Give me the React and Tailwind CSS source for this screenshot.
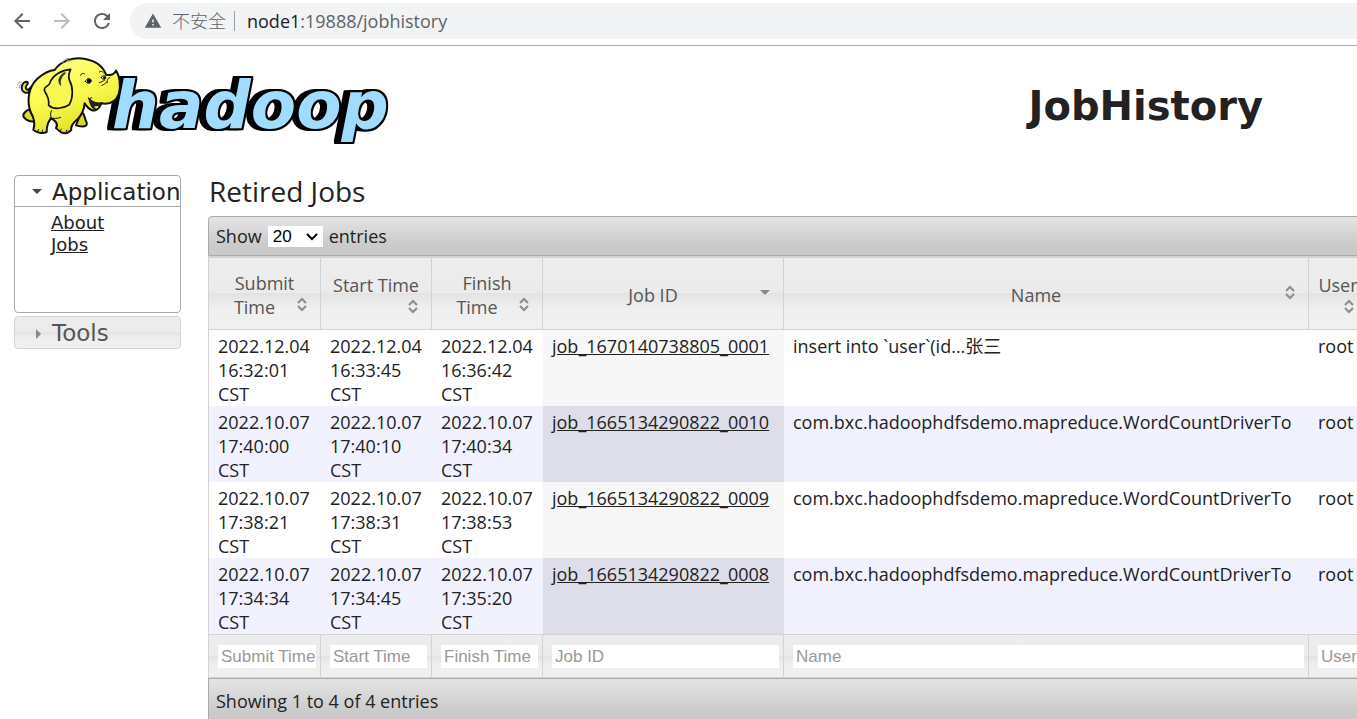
import React from "react";
import { MdArrowBack, MdArrowForward, MdRefresh, MdWarning } from "react-icons/md";

const jobs = [
  { submit: "2022.12.04 16:32:01 CST", start: "2022.12.04 16:33:45 CST", finish: "2022.12.04 16:36:42 CST", id: "job_1670140738805_0001", name: "insert into `user`(id...张三", user: "root" },
  { submit: "2022.10.07 17:40:00 CST", start: "2022.10.07 17:40:10 CST", finish: "2022.10.07 17:40:34 CST", id: "job_1665134290822_0010", name: "com.bxc.hadoophdfsdemo.mapreduce.WordCountDriverTo", user: "root" },
  { submit: "2022.10.07 17:38:21 CST", start: "2022.10.07 17:38:31 CST", finish: "2022.10.07 17:38:53 CST", id: "job_1665134290822_0009", name: "com.bxc.hadoophdfsdemo.mapreduce.WordCountDriverTo", user: "root" },
  { submit: "2022.10.07 17:34:34 CST", start: "2022.10.07 17:34:45 CST", finish: "2022.10.07 17:35:20 CST", id: "job_1665134290822_0008", name: "com.bxc.hadoophdfsdemo.mapreduce.WordCountDriverTo", user: "root" },
];

const columns = ["Submit Time", "Start Time", "Finish Time", "Job ID", "Name", "User"];

function HadoopLogo() {
  return (
    <svg width="384" height="100" viewBox="0 0 1152 300" role="img" aria-label="hadoop" className="shrink-0">
      <defs>
        <linearGradient id="skin" x1="0" y1="0" x2="0.4" y2="1">
          <stop offset="0" stopColor="#ffff8c" />
          <stop offset="0.55" stopColor="#fbfb50" />
          <stop offset="1" stopColor="#e2e22c" />
        </linearGradient>
        <filter id="outline" x="-5%" y="-10%" width="110%" height="120%">
          <feMorphology in="SourceAlpha" operator="dilate" radius="3" result="edge" />
          <feOffset in="edge" dx="-7" dy="0" result="near" />
          <feOffset in="edge" dx="-15" dy="0" result="far" />
          <feMerge>
            <feMergeNode in="far" />
            <feMergeNode in="near" />
            <feMergeNode in="edge" />
            <feMergeNode in="SourceGraphic" />
          </feMerge>
        </filter>
      </defs>
      <text x="306" y="235" fontFamily="DejaVu Sans" fontWeight="700" fontStyle="italic" fontSize="198" fill="#a0dcff" stroke="#000" strokeWidth="6" strokeLinejoin="round" paintOrder="stroke" filter="url(#outline)">
        <tspan>h</tspan><tspan>a</tspan><tspan>d</tspan><tspan>o</tspan><tspan>o</tspan><tspan>p</tspan>
      </text>
      <g stroke="#111" strokeWidth="6" strokeLinejoin="round" strokeLinecap="round">
        <path d="M58 178 C44 184 36 194 42 202 C50 212 62 216 76 214Z" fill="#dede30" />
        <path d="M212 190 C224 186 222 202 230 218 C234 230 216 232 198 226Z" fill="#d8d82c" />
        <path d="M56 128 C44 130 34 124 35 112 C36 102 44 92 52 96 C58 102 44 106 48 116 C52 122 58 118 62 112Z" fill="#e8e838" />
        <path d="M134 60 C150 34 190 20 222 26 C256 32 280 50 288 74 C304 78 312 74 318 62 C328 76 334 108 326 132 C318 154 300 164 274 160 C268 176 256 186 244 180 C234 176 230 168 224 160 C222 182 214 196 202 208 C188 220 182 232 184 240 C176 248 168 250 162 250 C150 248 144 240 138 234 C146 222 136 212 124 205 C112 216 110 230 110 246 C98 252 80 248 70 240 C76 222 74 206 62 186 C50 154 54 112 82 86 C96 74 112 62 134 60Z" fill="url(#skin)" />
        <path d="M182 58 C154 60 128 76 120 98 C116 112 98 108 104 124 C112 136 118 150 116 166 C132 180 158 176 178 164 C190 142 190 112 178 90 C174 78 178 66 182 58Z" fill="#f8f855" strokeWidth="5" />
        <path d="M162 68 C146 80 142 94 152 106 C148 90 156 78 166 70Z" fill="#333" strokeWidth="2" />
        <path d="M236 144 C248 158 262 160 276 158 C268 174 262 180 250 176 C242 170 240 156 236 144Z" fill="#222" strokeWidth="3" />
        <path d="M252 170 C258 166 264 168 266 170 C262 177 256 177 252 170Z" fill="#dce43a" stroke="none" />
        <path d="M150 243 L154 237 M168 246 L170 240 M82 244 L86 238 M96 246 L98 240 M120 204 C130 206 144 206 152 202 M124 204 C120 196 122 188 124 182" fill="none" strokeWidth="3" />
        <path d="M226 94 C230 84 242 82 244 92 C242 102 232 102 226 94Z" fill="#fff" strokeWidth="3" />
        <circle cx="237" cy="93" r="7" fill="#111" stroke="none" />
        <path d="M274 82 C278 74 286 76 288 84 C284 92 278 90 274 82Z" fill="#fff" strokeWidth="3" />
        <circle cx="283" cy="83" r="4" fill="#111" stroke="none" />
        <path d="M212 76 C214 70 220 68 224 72 M268 66 C272 62 276 64 280 68 M268 98 C274 96 280 94 284 90 M276 106 C282 104 286 100 290 96 M300 82 C292 86 290 92 292 98 M238 148 C240 144 244 142 246 144" fill="none" strokeWidth="3" />
      </g>
      <g stroke="#999" strokeWidth="3" fill="none" strokeLinecap="round">
        <path d="M158 38 C160 28 170 24 182 26 M166 38 C168 34 172 32 178 32 M22 104 C24 98 28 96 34 96 M28 114 C26 106 30 102 36 102" />
      </g>
    </svg>
  );
}

function SortIcon({ sorted }) {
  return (
    <svg width="20" height="20" viewBox="0 0 20 20" className="float-right" aria-hidden="true">
      {sorted ? (
        <path d="M5 7 H15 L10 12 Z" fill="#888" />
      ) : (
        <path d="M6 8 L10 4 L14 8 M6 11 L10 15 L14 11" fill="none" stroke="#8c8c8c" strokeWidth="2" />
      )}
    </svg>
  );
}

const barFill = "bg-[linear-gradient(to_bottom,#e4e4e4,#cacaca_75%,#cacaca)]";
const cellFill = "bg-[linear-gradient(to_bottom,#ededed,#ebebeb_49%,#e3e3e3_50%,#efefef_70%,#f0f0f0)]";

export default function App() {
  return (
    <div className="h-screen overflow-hidden bg-white font-['Open_Sans','Noto_Sans_CJK_SC',sans-serif] text-lg leading-6 text-[#222]">
      <div className="flex h-[46px] items-center border-b border-[#aaa] pb-[3px] pl-[10px] text-[#5f6368]">
        <div className="flex gap-4">
          <button aria-label="Back"><MdArrowBack size={24} /></button>
          <button aria-label="Forward" className="text-[#babcbe]"><MdArrowForward size={24} /></button>
          <button aria-label="Reload"><MdRefresh size={24} /></button>
        </div>
        <div className="ml-4 flex h-[36px] flex-1 items-center rounded-l-full bg-[#f1f3f4] pl-[14px]">
          <MdWarning size={18} />
          <span className="ml-[10px] font-light">不安全</span>
          <span className="mr-3 ml-2 h-5 w-px bg-[#9aa0a6]" />
          <span><span className="text-[#202124]">node1</span>:19888/jobhistory</span>
        </div>
      </div>

      <header className="flex items-center justify-between pt-1 pr-[94px] pl-[10px]">
        <HadoopLogo />
        <h1 className="pt-3 font-['DejaVu_Sans',sans-serif] text-[40px] leading-[48px] font-bold">JobHistory</h1>
      </header>

      <div className="flex items-start gap-[27px] pt-[25px] pl-[14px]">
        <nav className="w-[167px] shrink-0 font-['DejaVu_Sans',sans-serif]">
          <section className="h-[138px] rounded border border-[#aaa]">
            <h3 className="border-b border-[#aaa] pt-[2px] text-[23px] leading-[28px]">
              <button className="flex w-full items-center pl-4 whitespace-nowrap">
                <svg width="12" height="12" viewBox="0 0 12 12" className="shrink-0" aria-hidden="true"><path d="M1 3 H11 L6 8 Z" fill="#454545" /></svg>
                <span className="ml-[9px]">Application</span>
              </button>
            </h3>
            <ul className="pt-[5px] pl-9 leading-[22px]">
              <li><a href="#about" className="underline">About</a></li>
              <li><a href="#jobs" className="underline">Jobs</a></li>
            </ul>
          </section>
          <h3 className={"mt-[3px] rounded border border-[#d3d3d3] pt-[2px] text-[23px] leading-[29px] text-[#555] " + cellFill}>
            <button className="flex w-full items-center pl-4">
              <svg width="12" height="12" viewBox="0 0 12 12" className="shrink-0" aria-hidden="true"><path d="M5 1 V11 L10 6 Z" fill="#888" /></svg>
              <span className="ml-[9px]">Tools</span>
            </button>
          </h3>
        </nav>

        <main className="min-w-0 flex-1">
          <h2 className="mb-[9px] pl-px text-[28px] leading-8">Retired Jobs</h2>
          <div className="min-w-[1160px]">
            <div className={"flex h-10 items-center rounded-t border border-[#aaa] pl-[7px] " + barFill}>
              <label htmlFor="length">Show</label>
              <span className="relative mx-[6px] flex">
                <select id="length" defaultValue="20" className="h-[21px] w-[55px] appearance-none bg-white pl-[5px] font-['Liberation_Sans',sans-serif] text-[17px] leading-[21px] text-black">
                  <option>20</option>
                  <option>40</option>
                </select>
                <svg width="12" height="8" viewBox="0 0 12 8" className="pointer-events-none absolute top-[7px] right-[5px]" aria-hidden="true"><path d="M1 1 L6 6 L11 1" fill="none" stroke="#000" strokeWidth="2" /></svg>
              </span>
              <span>entries</span>
            </div>

            <table className="w-full table-fixed border-separate border-spacing-0 border-l border-[#d3d3d3]">
              <colgroup>
                <col className="w-[112px]" />
                <col className="w-[111px]" />
                <col className="w-[111px]" />
                <col className="w-[241px]" />
                <col className="w-[525px]" />
                <col />
              </colgroup>
              <thead>
                <tr>
                  {columns.map((c) => (
                    <th key={c} scope="col" className={"h-[74px] border-t-2 border-r border-b border-[#d3d3d3] px-2 pt-[2px] pb-0 align-middle font-normal text-[#555] " + cellFill}>
                      <div className="flow-root text-center">
                        {c}
                        <SortIcon sorted={c === "Job ID"} />
                      </div>
                    </th>
                  ))}
                </tr>
              </thead>
              <tbody>
                {jobs.map((j) => (
                  <tr key={j.id} className="group align-top even:bg-[#f2f2ff]">
                    <td className="pt-1 pb-0 pl-[9px]">{j.submit}</td>
                    <td className="pt-1 pb-0 pl-[9px]">{j.start}</td>
                    <td className="pt-1 pb-0 pl-[9px]">{j.finish}</td>
                    <td className="bg-[#f7f7f7] pt-1 pb-0 pl-[9px] group-even:bg-[#dedeea]"><a href={"#" + j.id} className="underline">{j.id}</a></td>
                    <td className="pt-1 pb-0 pl-[9px]">{j.name}</td>
                    <td className="pt-1 pb-0 pl-[9px]">{j.user}</td>
                  </tr>
                ))}
              </tbody>
              <tfoot>
                <tr>
                  {columns.map((c) => (
                    <th key={c} className={"h-[44px] border-t border-r border-b border-[#d3d3d3] py-0 pr-[4px] pl-[9px] font-normal " + cellFill}>
                      <input aria-label={c} placeholder={c} className="block h-[23px] w-full bg-white pl-[3px] font-['Liberation_Sans',sans-serif] text-[17px] leading-[23px] placeholder:text-[#999]" />
                    </th>
                  ))}
                </tr>
              </tfoot>
            </table>

            <div className={"flex h-[46px] items-center border border-[#aaa] pl-[7px] " + barFill}>Showing 1 to 4 of 4 entries</div>
          </div>
        </main>
      </div>
    </div>
  );
}
